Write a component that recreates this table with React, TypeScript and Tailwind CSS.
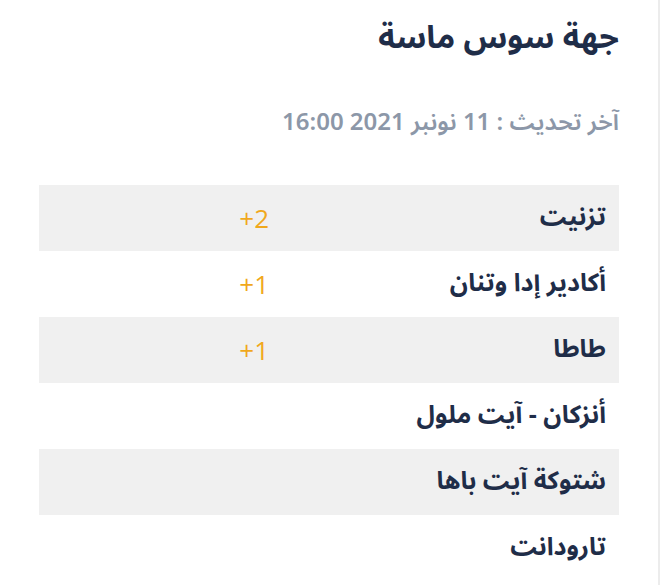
const ROWS: { name: string; delta?: string }[] = [
  { name: "تزنيت", delta: "+2" },
  { name: "أكادير إدا وتنان", delta: "+1" },
  { name: "طاطا", delta: "+1" },
  { name: "أنزكان - آيت ملول" },
  { name: "شتوكة آيت باها" },
  { name: "تارودانت" },
];

const AR = "font-['Noto_Sans_Arabic','DejaVu_Sans','Noto_Sans',sans-serif]";

export default function App() {
  return (
    <div className="flex h-[585px] w-[660px] bg-white">
      <div dir="rtl" className={`flex-1 pr-[39px] pl-[39px] ${AR}`}>
        <h1 className="pt-[15px] text-[32px] leading-[46px] font-bold text-[#1f2d48]">
          جهة سوس ماسة
        </h1>
        <p className="mt-[45px] text-[24px] leading-[34px] font-semibold text-[#8c97a8]">
          آخر تحديث : 11 نونبر 2021 16:00
        </p>
        <div className="mt-[45px]">
          {ROWS.map((row, i) => (
            <div
              key={i}
              className={`flex h-[66px] items-center ${i % 2 === 0 ? "bg-[#f0f0f0]" : "bg-white"}`}
            >
              <div className="w-[339px] pr-[13px] text-[25px] font-bold text-[#1f2d48]">
                {row.name}
              </div>
              <div className="pr-[11px] font-['Open_Sans',sans-serif] text-[26px] font-normal text-[#f0a81c]">
                <span dir="ltr">{row.delta}</span>
              </div>
            </div>
          ))}
        </div>
      </div>
      <div className="w-[2px] bg-[#ececec]" />
    </div>
  );
}
